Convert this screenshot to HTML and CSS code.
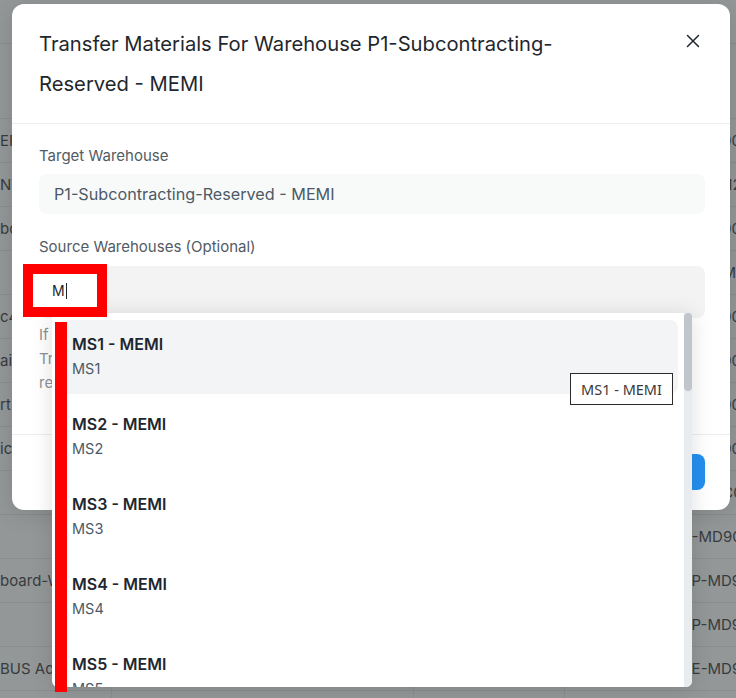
FILE: index.html
```html
<!DOCTYPE html>
<html lang="en">
<head>
<meta charset="utf-8">
<title>Transfer Materials</title>
<link rel="stylesheet" href="styles.css">
</head>
<body>
<div class="page">
  <div class="topbar"></div>
  <div class="thead"></div>
  <div class="trow"><span class="c1">EF Cable</span><span class="c2"></span><span class="c3"></span><span class="c4">P-MD9001</span></div>
  <div class="trow"><span class="c1">NVMe</span><span class="c2"></span><span class="c3"></span><span class="c4">SSD-M2X</span></div>
  <div class="trow"><span class="c1">board</span><span class="c2"></span><span class="c3"></span><span class="c4">P-MD9002</span></div>
  <div class="trow"><span class="c1"></span><span class="c2"></span><span class="c3"></span><span class="c4">RAM-M4X</span></div>
  <div class="trow"><span class="c1">c4 Unit</span><span class="c2"></span><span class="c3"></span><span class="c4">P-MD9003</span></div>
  <div class="trow"><span class="c1">aine</span><span class="c2"></span><span class="c3"></span><span class="c4">P-MD9004</span></div>
  <div class="trow"><span class="c1">rt Cable</span><span class="c2"></span><span class="c3"></span><span class="c4">P-MD9005</span></div>
  <div class="trow"><span class="c1">ic Pad</span><span class="c2"></span><span class="c3"></span><span class="c4">P-MD9006</span></div>
  <div class="trow"><span class="c1"></span><span class="c2"></span><span class="c3"></span><span class="c4">P-MDC007</span></div>
  <div class="trow"><span class="c1"></span><span class="c2"></span><span class="c3"></span><span class="c4">S-MD9008</span></div>
  <div class="trow"><span class="c1">board-Wireless</span><span class="c2"></span><span class="c3"></span><span class="c4">SP-MD9009</span></div>
  <div class="trow"><span class="c1"></span><span class="c2"></span><span class="c3"></span><span class="c4">SP-MD9010</span></div>
  <div class="trow"><span class="c1">BUS Adapter</span><span class="c2"></span><span class="c3"></span><span class="c4">SE-MD9011</span></div>
  <div class="trow"><span class="c1"></span><span class="c2"></span><span class="c3"></span><span class="c4"></span></div>
</div>

<div class="modal">
  <div class="modal-header">
    <h4 class="modal-title">Transfer Materials For Warehouse P1-Subcontracting-Reserved - MEMI</h4>
    <svg class="close" viewBox="0 0 16 16" width="16" height="16" aria-hidden="true">
      <path d="M2.5 2.5 L13.5 13.5 M13.5 2.5 L2.5 13.5" stroke="#1f272e" stroke-width="1.5" stroke-linecap="round" fill="none"/>
    </svg>
  </div>
  <div class="modal-body">
    <div class="field field-target">
      <label class="label">Target Warehouse</label>
      <div class="control control-static">P1-Subcontracting-Reserved - MEMI</div>
    </div>
    <div class="field field-source">
      <label class="label">Source Warehouses (Optional)</label>
      <div class="control control-multi"></div>
      <p class="help">If no source warehouse is selected, stock will be picked from any warehouse.<br>Transfer entries will be created for each selected warehouse holding the<br>required quantity of materials.</p>
      <div class="dropdown">
        <div class="list">
          <div class="item active"><div class="item-title">MS1 - MEMI</div><div class="item-sub">MS1</div></div>
          <div class="item"><div class="item-title">MS2 - MEMI</div><div class="item-sub">MS2</div></div>
          <div class="item"><div class="item-title">MS3 - MEMI</div><div class="item-sub">MS3</div></div>
          <div class="item"><div class="item-title">MS4 - MEMI</div><div class="item-sub">MS4</div></div>
          <div class="item"><div class="item-title">MS5 - MEMI</div><div class="item-sub">MS5</div></div>
          <div class="item"><div class="item-title">MS6 - MEMI</div><div class="item-sub">MS6</div></div>
        </div>
        <div class="scrollbar"><div class="thumb"></div></div>
      </div>
    </div>
  </div>
  <div class="modal-footer">
    <button class="btn-primary">Transfer</button>
  </div>
</div>

<div class="mark-box"><span class="typed">M</span><span class="caret"></span></div>
<div class="mark-bar"></div>
<div class="tooltip">MS1 - MEMI</div>
</body>
</html>
```

FILE: styles.css
```css
* { box-sizing: border-box; }

html, body {
  margin: 0;
  padding: 0;
}

body {
  width: 736px;
  height: 698px;
  overflow: hidden;
  position: relative;
  background: #939798;
  font-family: Inter, "Noto Sans", sans-serif;
  color: #1f272e;
}

/* background page (dimmed) */
.page {
  width: 736px;
  height: 698px;
  overflow: hidden;
  color: #383c3e;
  font-size: 15px;
}

.topbar {
  height: 44px;
  border-bottom: 1px solid #898d8e;
}

.thead {
  height: 75px;
  border-bottom: 1px solid #898d8e;
}

.trow {
  display: grid;
  grid-template-columns: 112px 302px 151px 171px;
  height: 44px;
  border-bottom: 1px solid #898d8e;
}

.trow span {
  display: flex;
  align-items: center;
  white-space: nowrap;
  overflow: hidden;
  border-right: 1px solid #898d8e;
}

.trow .c1 { padding-left: 0; }
.trow .c4 { padding-left: 117px; border-right: 0; }

/* modal */
.modal {
  position: absolute;
  left: 12px;
  top: 4px;
  width: 718px;
  height: 506px;
  background: #ffffff;
  border-radius: 12px;
  box-shadow: 0 4px 24px rgba(0, 0, 0, 0.12);
}

.modal-header {
  display: flex;
  align-items: flex-start;
  justify-content: space-between;
  padding: 20px 29px 19px 27px;
  border-bottom: 1px solid #ededee;
}

.modal-title {
  margin: 0;
  width: 570px;
  font-size: 20.2px;
  line-height: 40px;
  font-weight: 400;
  color: #1f272e;
}

.close {
  flex: none;
  margin-top: 9px;
}

.modal-body {
  height: 310px;
  padding: 22px 25px 0 27px;
}

.field-target {
  margin-bottom: 23px;
}

.label {
  display: block;
  font-size: 15px;
  line-height: 20px;
  color: #525b63;
  margin-bottom: 8px;
}

.field-source .label {
  margin-bottom: 9px;
}

.control {
  border-radius: 8px;
}

.control-static {
  height: 40px;
  display: flex;
  align-items: center;
  padding: 0 15px;
  background: #f8f9f9;
  font-size: 16.2px;
  color: #4c5a67;
}

.control-multi {
  height: 52px;
  background: #f3f3f4;
}

.field-source {
  position: relative;
}

.help {
  margin: 5px 0 0;
  font-size: 15px;
  line-height: 24px;
  color: #8b9197;
  white-space: nowrap;
  overflow: hidden;
}

.dropdown {
  position: absolute;
  left: 13px;
  top: 76px;
  width: 640px;
  height: 374px;
  display: flex;
  background: #ffffff;
  border-radius: 0 0 6px 6px;
  box-shadow: 0 2px 22px rgba(0, 0, 0, 0.13);
  overflow: hidden;
  z-index: 5;
}

.list {
  flex: 1;
  min-width: 0;
  padding: 7px 6px 0 6px;
  overflow: hidden;
}

.scrollbar {
  flex: none;
  width: 8px;
  background: #e9ecef;
}

.thumb {
  height: 78px;
  border-radius: 4px;
  background: #c1c6cc;
}

.item {
  padding: 14px 14px 15px;
  margin-bottom: 6px;
  border-radius: 8px;
}

.item.active {
  background: #f3f4f6;
}

.item-title {
  font-size: 16px;
  line-height: 20px;
  font-weight: 600;
  color: #1f272e;
}

.item-sub {
  margin-top: 5px;
  font-size: 14.5px;
  line-height: 20px;
  color: #4c5a67;
}

.modal-footer {
  display: flex;
  justify-content: flex-end;
  padding: 19px 25px 20px;
  border-top: 1px solid #ededee;
}

.btn-primary {
  height: 36px;
  padding: 0 16px;
  border: 0;
  border-radius: 8px;
  background: #2490ef;
  color: #ffffff;
  font-family: Inter, sans-serif;
  font-size: 14px;
}

/* annotations */
.mark-box {
  position: absolute;
  left: 23px;
  top: 264px;
  width: 84px;
  height: 53px;
  border: 10px solid #ff0000;
  background: #ffffff;
  display: flex;
  align-items: center;
  padding-left: 19px;
  font-size: 14px;
  color: #1f272e;
  z-index: 10;
}

.caret {
  display: inline-block;
  width: 1px;
  height: 16px;
  margin-left: 1px;
  background: #1f272e;
}

.mark-bar {
  position: absolute;
  left: 55px;
  top: 322px;
  width: 12px;
  height: 370px;
  background: #ff0000;
  z-index: 10;
}

.tooltip {
  position: absolute;
  left: 570px;
  top: 373px;
  width: 103px;
  height: 32px;
  border: 1px solid #2b2b2b;
  background: #ffffff;
  display: flex;
  align-items: center;
  justify-content: center;
  font-family: "Noto Sans", sans-serif;
  font-size: 14.5px;
  color: #3a3a3a;
  z-index: 10;
}
```
